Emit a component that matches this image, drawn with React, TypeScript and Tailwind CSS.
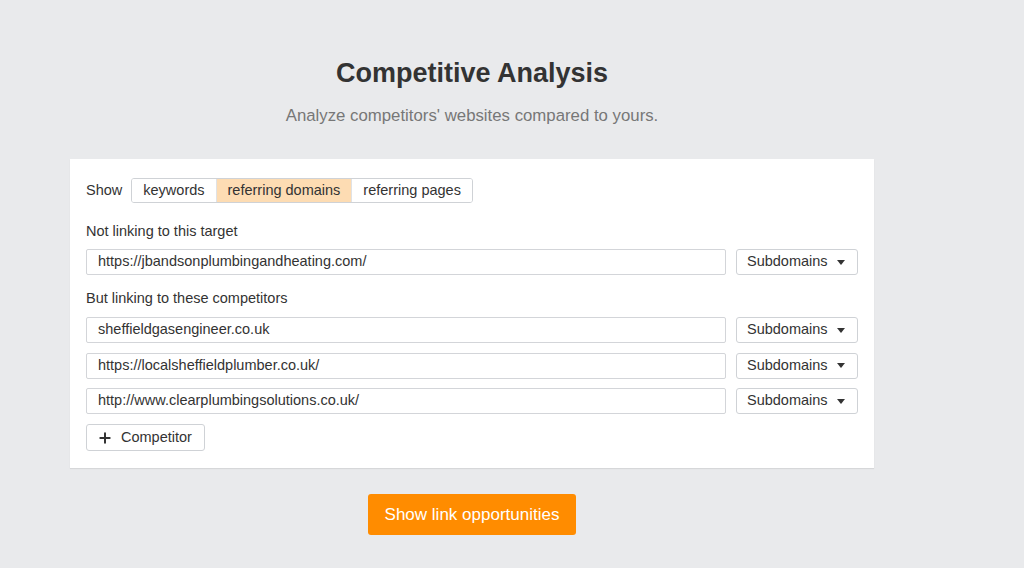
import { Plus } from "lucide-react";

const competitors = [
    "sheffieldgasengineer.co.uk",
    "https://localsheffieldplumber.co.uk/",
    "http://www.clearplumbingsolutions.co.uk/",
];

function SubdomainsSelect() {
    return (
        <button className="flex h-[26px] w-[122px] shrink-0 items-center justify-between rounded-[3px] border border-[#cfd2d6] bg-white pl-[10px] pr-[12px] text-[14.5px] text-[#333]">
            <span>Subdomains</span>
            <span className="h-0 w-0 border-x-[4px] border-t-[5px] border-x-transparent border-t-[#333]" />
        </button>
    );
}

function UrlRow({ value }: { value: string }) {
    return (
        <div className="flex gap-[10px]">
            <div className="flex h-[26px] flex-1 items-center rounded-[2px] border border-[#d3d5d9] bg-white px-[11px] text-[14.5px] text-[#333]">
                {value}
            </div>
            <SubdomainsSelect />
        </div>
    );
}

export default function App() {
    const tabs = ["keywords", "referring domains", "referring pages"];
    return (
        <div
            className="min-h-[568px] w-full bg-[#e9eaec] pt-[57px]"
            style={{ fontFamily: '"Liberation Sans", Arial, sans-serif' }}
        >
            <div className="ml-[70px] w-[804px]">
                <h1 className="text-center text-[27px] font-bold leading-[32px] text-[#333]">
                    Competitive Analysis
                </h1>
                <p className="mt-[17px] text-center text-[16.8px] leading-[20px] text-[#777]">
                    Analyze competitors' websites compared to yours.
                </p>

                <div className="mt-[33px] bg-white px-[16px] pb-[17px] pt-[19px] shadow-[0_1px_1px_rgba(0,0,0,0.08)]">
                    {/* Show tabs */}
                    <div className="flex items-center gap-[9px]">
                        <span className="text-[14.5px] text-[#333]">Show</span>
                        <div className="flex h-[25px] overflow-hidden rounded-[3px] border border-[#cfd2d6] text-[14.5px] text-[#333]">
                            {tabs.map((t, i) => (
                                <div
                                    key={t}
                                    className={`flex items-center px-[11px] ${i === 1 ? "bg-[#fddcb3]" : "bg-white"} ${i > 0 ? "border-l border-[#e0e2e5]" : ""}`}
                                >
                                    {t}
                                </div>
                            ))}
                        </div>
                    </div>

                    <div className="mt-[19px] text-[14.5px] leading-[18px] text-[#333]">Not linking to this target</div>
                    <div className="mt-[9px]">
                        <UrlRow value="https://jbandsonplumbingandheating.com/" />
                    </div>

                    <div className="mt-[14px] text-[14.5px] leading-[18px] text-[#333]">But linking to these competitors</div>
                    <div className="mt-[10px] flex flex-col gap-[9.5px]">
                        {competitors.map((c) => (
                            <UrlRow key={c} value={c} />
                        ))}
                    </div>

                    <button className="mt-[10px] flex h-[27px] items-center gap-[8px] rounded-[3px] border border-[#cfd2d6] bg-white pl-[10px] pr-[12px] text-[14.5px] text-[#333]">
                        <Plus size={16} strokeWidth={3} className="text-[#333]" />
                        Competitor
                    </button>
                </div>

                <div className="mt-[26px] flex justify-center">
                    <button className="h-[41px] rounded-[3px] bg-[#ff8c00] px-[17px] text-[17px] text-white">
                        Show link opportunities
                    </button>
                </div>
            </div>
        </div>
    );
}
